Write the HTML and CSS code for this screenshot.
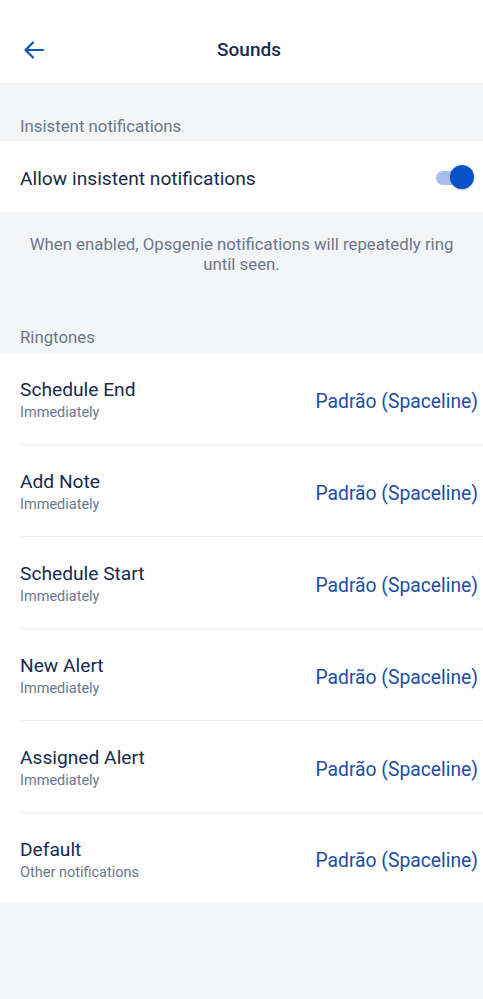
FILE: index.html
```html
<!DOCTYPE html>
<html>
<head>
<meta charset="utf-8">
<link rel="stylesheet" href="styles.css">
</head>
<body>
<div class="app">
  <header class="topbar">
    <button class="back" aria-label="Back">
      <svg width="24" height="24" viewBox="0 0 24 24"><path d="M21 12H4M11 4.5L3.5 12 11 19.5" fill="none" stroke="#0c52c4" stroke-width="2.2" stroke-linecap="round" stroke-linejoin="round"/></svg>
    </button>
    <h1 class="title">Sounds</h1>
  </header>

  <div class="section-label first">Insistent notifications</div>
  <div class="card">
    <div class="toggle-row">
      <span class="row-title">Allow insistent notifications</span>
      <span class="switch"><span class="track"></span><span class="thumb"></span></span>
    </div>
  </div>
  <p class="hint">When enabled, Opsgenie notifications will repeatedly ring until seen.</p>

  <div class="section-label">Ringtones</div>
  <div class="card list">
    <div class="item"><div class="texts"><div class="row-title">Schedule End</div><div class="sub">Immediately</div></div><div class="value">Padrão (Spaceline)</div></div>
    <div class="item"><div class="texts"><div class="row-title">Add Note</div><div class="sub">Immediately</div></div><div class="value">Padrão (Spaceline)</div></div>
    <div class="item"><div class="texts"><div class="row-title">Schedule Start</div><div class="sub">Immediately</div></div><div class="value">Padrão (Spaceline)</div></div>
    <div class="item"><div class="texts"><div class="row-title">New Alert</div><div class="sub">Immediately</div></div><div class="value">Padrão (Spaceline)</div></div>
    <div class="item"><div class="texts"><div class="row-title">Assigned Alert</div><div class="sub">Immediately</div></div><div class="value">Padrão (Spaceline)</div></div>
    <div class="item"><div class="texts"><div class="row-title">Default</div><div class="sub">Other notifications</div></div><div class="value">Padrão (Spaceline)</div></div>
  </div>
</div>
</body>
</html>
```

FILE: styles.css
```css
* { box-sizing: border-box; }
html, body { margin: 0; padding: 0; }
body {
  background: #f4f5f7;
  font-family: Roboto, "Noto Sans", "Liberation Sans", sans-serif;
  color: #172b4d;
}
.app { width: 483px; min-height: 999px; background: #f4f5f7; }
.topbar {
  height: 83px;
  background: #ffffff;
  display: flex;
  align-items: center;
  position: relative;
  padding-top: 16px;
}
.back {
  border: 0;
  background: none;
  padding: 0;
  margin-left: 22px;
  width: 24px;
  height: 24px;
  display: flex;
}
.title {
  position: absolute;
  left: 0; right: 0;
  top: 38px;
  margin: 0;
  text-align: center;
  font-size: 19px;
  font-weight: 500;
  line-height: 24px;
  color: #172b4d;
  pointer-events: none;
  padding-left: 15px;
}
.section-label {
  font-size: 16.8px;
  line-height: 20px;
  color: #6b778c;
  padding: 53px 20px 6px;
}
.section-label.first { padding-top: 33px; padding-bottom: 5px; }
.card { background: #ffffff; }
.toggle-row {
  height: 71px;
  display: flex;
  align-items: center;
  justify-content: space-between;
  padding: 3px 9px 0 20px;
}
.row-title {
  font-size: 19.2px;
  line-height: 23px;
  color: #172b4d;
}
.switch { position: relative; width: 40px; height: 26px; display: block; }
.track {
  position: absolute;
  left: 2px; top: 6px;
  width: 34px; height: 14px;
  border-radius: 7px;
  background: #a7bdeb;
}
.thumb {
  position: absolute;
  right: 0; top: 0;
  width: 24px; height: 24px;
  border-radius: 50%;
  background: #0a51c8;
  box-shadow: 0 1px 2px rgba(0,0,0,0.25);
}
.hint {
  margin: 0;
  padding: 22px 16px 0;
  text-align: center;
  font-size: 16.8px;
  line-height: 20px;
  color: #6b778c;
}
.list { padding-left: 20px; }
.item {
  height: 92px;
  display: flex;
  align-items: center;
  justify-content: space-between;
  padding-right: 5px;
  border-bottom: 1px solid #ebecf0;
}
.item:last-child { border-bottom: 0; height: 90px; }
.texts { display: flex; flex-direction: column; padding-top: 3px; }
.sub {
  font-size: 14.5px;
  line-height: 18px;
  color: #6b778c;
  margin-top: 3px;
}
.value {
  font-size: 19.3px;
  line-height: 23px;
  color: #1b4fa1;
  padding-top: 5px;
}
```
